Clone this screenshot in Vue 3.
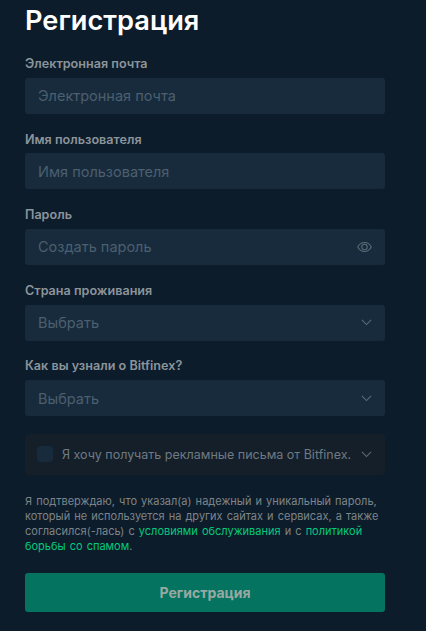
<template>
  <div class="page">
    <h1 class="title">Регистрация</h1>

    <div v-for="f in fields" :key="f.label" class="field">
      <label class="label">{{ f.label }}</label>
      <div class="control">
        <span class="placeholder">{{ f.placeholder }}</span>
        <svg v-if="f.icon === 'eye'" class="eye" viewBox="0 0 16 12" fill="none" stroke="currentColor" stroke-width="1.1">
          <path d="M.8 6C2.4 2.8 5 1.2 8 1.2S13.600 2.800 15.200 6C13.600 9.200 11 10.800 8 10.800S2.400 9.200.8 6Z" />
          <circle cx="8" cy="6" r="2.900" />
        </svg>
        <svg v-else-if="f.icon === 'chevron'" class="chevron" viewBox="0 0 12 7" fill="none" stroke="currentColor" stroke-width="1.100">
          <path d="M1 1l5 5 5-5" />
        </svg>
      </div>
    </div>

    <div class="promo">
      <span class="checkbox"></span>
      <span class="promo-text">Я хочу получать рекламные письма от Bitfinex.</span>
      <svg class="chevron" viewBox="0 0 12 7" fill="none" stroke="currentColor" stroke-width="1.100">
        <path d="M1 1l5 5 5-5" />
      </svg>
    </div>

    <p class="terms">
      Я подтверждаю, что указал(а) надежный и уникальный пароль, который не используется на других сайтах и сервисах, а также согласился(-лась) с
      <a class="link">условиями обслуживания</a> и с <a class="link">политикой борьбы со спамом</a>.
    </p>

    <button class="submit" type="button">Регистрация</button>
  </div>
</template>

<script setup>
const fields = [
  { label: 'Электронная почта', placeholder: 'Электронная почта' },
  { label: 'Имя пользователя', placeholder: 'Имя пользователя' },
  { label: 'Пароль', placeholder: 'Создать пароль', icon: 'eye' },
  { label: 'Страна проживания', placeholder: 'Выбрать', icon: 'chevron' },
  { label: 'Как вы узнали о Bitfinex?', placeholder: 'Выбрать', icon: 'chevron' },
]
</script>

<style>
html, body { background: #0d1c2a; }
</style>

<style scoped>
.page {
  width: 426px; height: 631px; box-sizing: border-box;
  padding: 0 41px 0 25px; overflow: hidden;
  background: #0d1c2a;
  font-family: Inter, 'Noto Sans', sans-serif;
}
.title {
  margin: 0 0 17.100px; padding-top: 4px;
  font-size: 27.200px; line-height: 34px; font-weight: 600;
  color: #fff;
}
.field { margin-bottom: 16.900px; }
.label {
  display: block; margin-bottom: 5.100px;
  font-size: 12.600px; line-height: 17.600px; font-weight: 600;
  color: #8b949b;
}
.control {
  display: flex; align-items: center; justify-content: space-between;
  height: 36px; padding: 0 13px;
  border-radius: 3px;
  background: #182b3d;
}
.placeholder { font-size: 14.500px; line-height: 18px; padding-top: 1px; color: #4b5f6d; }
.eye { width: 15px; height: 12px; color: #5c6d79; flex: none; }
.chevron { width: 11px; height: 6.500px; color: #5c6d79; flex: none; }
.promo {
  display: flex; align-items: center;
  height: 41px; margin-top: 17.600px; padding: 0 13px 0 12px;
  border-radius: 4px;
  background: #141f29;
}
.checkbox {
  width: 16px; height: 16px; flex: none;
  border-radius: 4px;
  background: #182b3d;
}
.promo-text {
  flex: 1; margin-left: 9px; white-space: nowrap;
  font-size: 12.500px; color: #6f7a83;
}
.terms {
  margin: 19px 0 0;
  font-size: 11px; line-height: 15.200px;
  word-spacing: 1px;
  color: #7d8489;
}
.link { color: #03ca7d; }
.submit {
  display: block; width: 100%; height: 39px; margin-top: 18.400px;
  border: 0; border-radius: 3px;
  background: #04735f;
  font-family: inherit; font-size: 14px; font-weight: 700;
  color: #98a9a3;
}
</style>
